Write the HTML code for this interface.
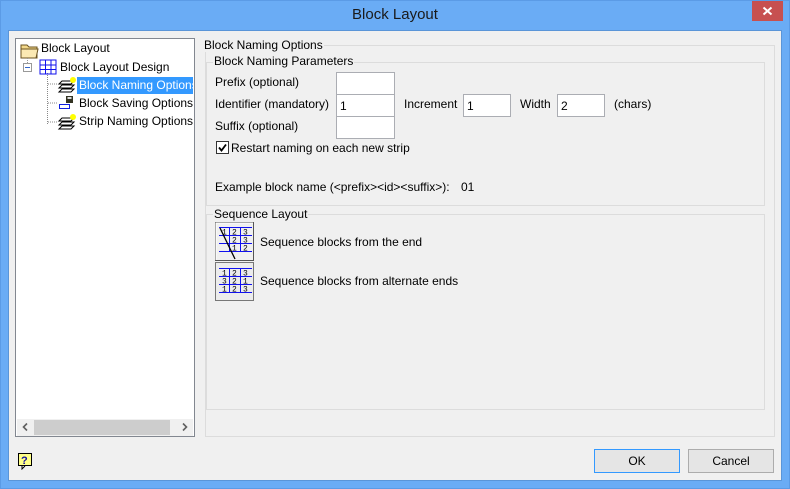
<!DOCTYPE html>
<html><head><style>
*{box-sizing:border-box;margin:0;padding:0}
body{width:790px;height:489px;position:relative;background:#5b9be6;font-family:"Liberation Sans",sans-serif;font-size:12px;color:#000;overflow:hidden}
.a{position:absolute;white-space:nowrap}
.win{position:absolute;left:1px;top:1px;width:788px;height:487px;background:#6aacf5}
.client{position:absolute;left:8px;top:30px;width:774px;height:451px;background:#f0f0f0;border:1px solid #5a95d8}
.box{position:absolute;border:1px solid #dcdcdc}
.inp{position:absolute;background:#fff;border:1px solid #abadb3;height:23px;padding:4px 3px;font-size:12px}
.btn{position:absolute;background:#e5e5e5;border:1px solid #acacac;text-align:center;line-height:22px;height:24px}
.lbl{position:absolute;background:#f0f0f0;padding:0 1px;white-space:nowrap}
</style></head><body>
<div class="win"></div>
<div class="a" style="left:0;top:6px;width:790px;text-align:center;font-size:15px;color:#1a1a1a">Block Layout</div>
<div class="a" style="left:752px;top:1px;width:31px;height:20px;background:#c75050"></div>
<svg class="a" style="left:762px;top:6px" width="11" height="10"><path d="M1.5 1.5l8 7M9.5 1.5l-8 7" stroke="#fff" stroke-width="2"/></svg>
<div class="client"></div>

<!-- tree -->
<div class="a" style="left:15px;top:38px;width:180px;height:399px;background:#fff;border:1px solid #828790"></div>
<svg class="a" style="left:16px;top:39px" width="178" height="100">
<path d="M5 6h6l2 2h8v11H5z" fill="#f3d88a" stroke="#6b5320"/><path d="M5 10h17l-2 9H5z" fill="#fbe9b3" stroke="#6b5320"/>
<rect x="7.5" y="24.5" width="8" height="8" fill="#fff" stroke="#999"/><path d="M9 28.5h5" stroke="#36c"/>
<path d="M11.5 19v5" stroke="#999" stroke-dasharray="1 1"/>
<path d="M31.5 34v52M32 45h10M32 64h10M32 83h10" stroke="#888" stroke-dasharray="1 1"/>
<path d="M24 21h16v14H24zM24 26h16M24 30.5h16M29.5 21v14M35 21v14" fill="none" stroke="#1010ee"/>
<g fill="#fff" stroke="#000"><path d="M46 50h12l-3 3H43z"/><path d="M46 46h12l-3 3H43z"/><path d="M46 42h12l-3 3H43z"/></g><circle cx="57" cy="41" r="3" fill="#ff0"/>
<path d="M43.5 65.5h10v4h-10z" fill="#fff" stroke="#1020e0"/><rect x="50" y="57" width="7" height="7" fill="#332"/><rect x="51.5" y="58" width="4" height="2" fill="#ddd"/>
<g fill="#fff" stroke="#000"><path d="M46 87h12l-3 3H43z"/><path d="M46 83h12l-3 3H43z"/><path d="M46 79h12l-3 3H43z"/></g><circle cx="57" cy="78" r="3" fill="#ff0"/>
</svg>
<div class="a" style="left:41px;top:41px">Block Layout</div>
<div class="a" style="left:60px;top:60px">Block Layout Design</div>
<div class="a" style="left:77px;top:77px;width:116px;height:17px;background:#3399ff;color:#fff;padding:1px 2px;overflow:hidden">Block Naming Options</div>
<div class="a" style="left:79px;top:96px">Block Saving Options</div>
<div class="a" style="left:79px;top:114px">Strip Naming Options</div>
<div class="a" style="left:17px;top:419px;width:176px;height:17px;background:#f0f0f0"></div>
<div class="a" style="left:34px;top:420px;width:136px;height:15px;background:#cdcdcd"></div>
<svg class="a" style="left:20px;top:422px" width="170" height="10"><path d="M7 1.5l-3.5 3.5 3.5 3.5M163 1.5l3.5 3.5-3.5 3.5" stroke="#606060" stroke-width="1.6" fill="none"/></svg>

<!-- groups -->
<div class="box" style="left:205px;top:45px;width:570px;height:392px"></div>
<div class="lbl" style="left:203px;top:38px">Block Naming Options</div>
<div class="box" style="left:206px;top:62px;width:559px;height:144px"></div>
<div class="lbl" style="left:213px;top:54px">Block Naming Parameters</div>
<div class="a" style="left:215px;top:75px">Prefix (optional)</div>
<div class="a" style="left:215px;top:97px">Identifier (mandatory)</div>
<div class="a" style="left:215px;top:119px">Suffix (optional)</div>
<div class="inp" style="left:336px;top:72px;width:59px"></div>
<div class="inp" style="left:336px;top:94px;width:59px">1</div>
<div class="inp" style="left:336px;top:116px;width:59px"></div>
<div class="a" style="left:404px;top:97px">Increment</div>
<div class="inp" style="left:463px;top:94px;width:48px">1</div>
<div class="a" style="left:520px;top:97px">Width</div>
<div class="inp" style="left:557px;top:94px;width:48px">2</div>
<div class="a" style="left:614px;top:97px">(chars)</div>
<svg class="a" style="left:216px;top:141px" width="13" height="13"><rect x="0.5" y="0.5" width="12" height="12" fill="#fff" stroke="#333"/><path d="M3 6.5l2.5 3 4.5-6" stroke="#000" stroke-width="1.8" fill="none"/></svg>
<div class="a" style="left:231px;top:141px">Restart naming on each new strip</div>
<div class="a" style="left:215px;top:180px">Example block name (&lt;prefix&gt;&lt;id&gt;&lt;suffix&gt;):</div>
<div class="a" style="left:461px;top:180px">01</div>

<div class="box" style="left:206px;top:214px;width:559px;height:196px"></div>
<div class="lbl" style="left:213px;top:207px">Sequence Layout</div>
<svg class="a" style="left:215px;top:222px" width="40" height="80" font-family="Liberation Mono" font-size="8">
<rect x="0.5" y="0.5" width="38" height="38" fill="#f0f0f0" stroke="#555"/><path d="M1 38V1h37" stroke="#fff" fill="none"/>
<path d="M4 5.5h33M4 13.5h33M4 21.5h33M4 29.5h33M14.5 5v24M25.5 5v24" stroke="#1010ee" fill="none"/>
<text x="7" y="12.5">1</text><text x="17" y="12.5">2</text><text x="28" y="12.5">3</text><text x="17" y="20.5">2</text><text x="28" y="20.5">3</text><text x="17" y="28.5">1</text><text x="28" y="28.5">2</text>
<path d="M5 6l15 31" stroke="#000" stroke-width="1.3"/>
<rect x="0.5" y="40.5" width="38" height="38" fill="#ececec" stroke="#777"/>
<path d="M4 46.5h33M4 54.5h33M4 62.5h33M4 70.5h33M14.5 46v24M25.5 46v24" stroke="#1010ee" fill="none"/>
<text x="7" y="53.5">1</text><text x="17" y="53.5">2</text><text x="28" y="53.5">3</text><text x="7" y="61.5">3</text><text x="17" y="61.5">2</text><text x="28" y="61.5">1</text><text x="7" y="69.5">1</text><text x="17" y="69.5">2</text><text x="28" y="69.5">3</text>
</svg>
<div class="a" style="left:260px;top:235px">Sequence blocks from the end</div>
<div class="a" style="left:260px;top:274px">Sequence blocks from alternate ends</div>

<!-- footer -->
<svg class="a" style="left:17px;top:452px" width="18" height="18"><rect x="1.5" y="1.5" width="13" height="12" fill="#ff8" stroke="#000"/><path d="M5 14l0 3 3-3" fill="#fff" stroke="#000"/><text x="4" y="12" font-size="11" font-weight="bold" fill="#1010a0" font-family="Liberation Sans">?</text></svg>
<div class="btn" style="left:594px;top:449px;width:86px;border-color:#3399ff">OK</div>
<div class="btn" style="left:688px;top:449px;width:86px">Cancel</div>
</body></html>
